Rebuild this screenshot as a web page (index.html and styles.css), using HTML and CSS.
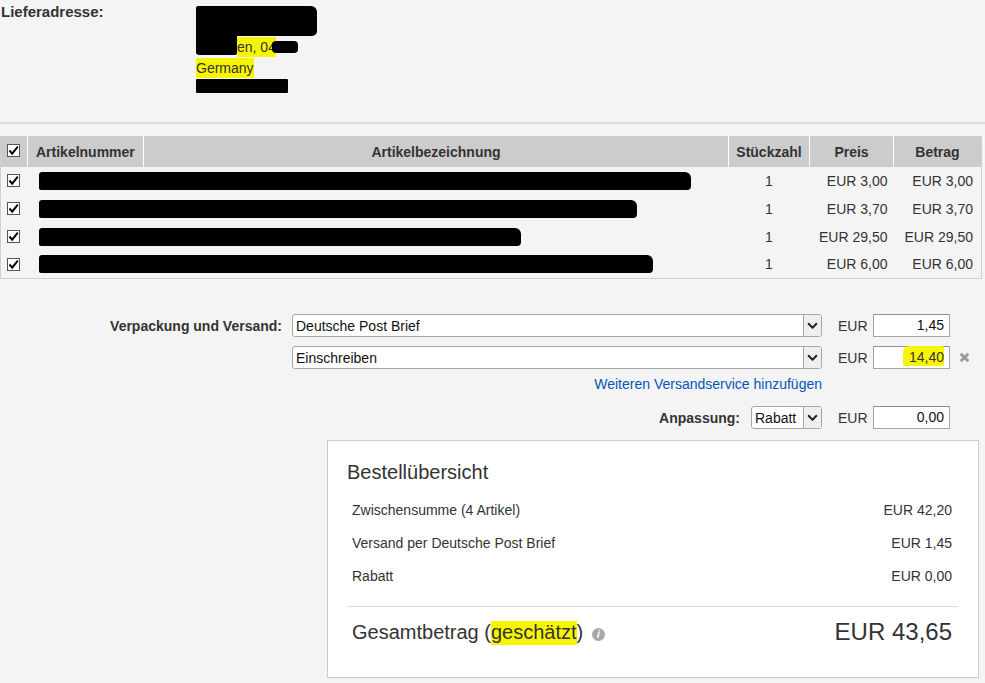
FILE: index.html
```html
<!DOCTYPE html>
<html lang="de">
<head>
    <meta charset="UTF-8">
    <title>Bestellung</title>
    <link rel="stylesheet" href="styles.css">
</head>
<body>
    <section class="address">
        <h2>Lieferadresse:</h2>
        <div class="address-lines">
            <span class="redact r-name"></span>
            <div class="addr-line">
                <span class="redact r-street"></span><span class="mark">en, 04</span><span class="redact r-zip"></span>
            </div>
            <div class="addr-line"><span class="mark">Germany</span></div>
            <span class="redact r-phone"></span>
        </div>
    </section>

    <table class="items">
        <colgroup>
            <col class="c-check">
            <col class="c-num">
            <col class="c-name">
            <col class="c-qty">
            <col class="c-price">
            <col class="c-sum">
        </colgroup>
        <thead>
            <tr>
                <th><span class="cb"><svg viewBox="0 0 11 11"><path d="M1.5 5.5 L4.2 8.6 L9.8 1.6"/></svg></span></th>
                <th class="left">Artikelnummer</th>
                <th>Artikelbezeichnung</th>
                <th>Stückzahl</th>
                <th>Preis</th>
                <th>Betrag</th>
            </tr>
        </thead>
        <tbody>
            <tr>
                <td><span class="cb"><svg viewBox="0 0 11 11"><path d="M1.5 5.5 L4.2 8.6 L9.8 1.6"/></svg></span></td>
                <td colspan="2"><span class="redact row-1"></span></td>
                <td class="qty">1</td>
                <td class="price">EUR 3,00</td>
                <td class="sum">EUR 3,00</td>
            </tr>
            <tr>
                <td><span class="cb"><svg viewBox="0 0 11 11"><path d="M1.5 5.5 L4.2 8.6 L9.8 1.6"/></svg></span></td>
                <td colspan="2"><span class="redact row-2"></span></td>
                <td class="qty">1</td>
                <td class="price">EUR 3,70</td>
                <td class="sum">EUR 3,70</td>
            </tr>
            <tr>
                <td><span class="cb"><svg viewBox="0 0 11 11"><path d="M1.5 5.5 L4.2 8.6 L9.8 1.6"/></svg></span></td>
                <td colspan="2"><span class="redact row-3"></span></td>
                <td class="qty">1</td>
                <td class="price">EUR 29,50</td>
                <td class="sum">EUR 29,50</td>
            </tr>
            <tr>
                <td><span class="cb"><svg viewBox="0 0 11 11"><path d="M1.5 5.5 L4.2 8.6 L9.8 1.6"/></svg></span></td>
                <td colspan="2"><span class="redact row-4"></span></td>
                <td class="qty">1</td>
                <td class="price">EUR 6,00</td>
                <td class="sum">EUR 6,00</td>
            </tr>
        </tbody>
    </table>

    <section class="shipping">
        <div class="ship-row">
            <label class="ship-label">Verpackung und Versand:</label>
            <div class="select wide">
                <span>Deutsche Post Brief</span>
                <span class="arrow"><svg viewBox="0 0 10 6"><path d="M1 1 L5 5 L9 1"/></svg></span>
            </div>
            <span class="cur">EUR</span>
            <div class="amount">1,45</div>
            <span></span>
        </div>
        <div class="ship-row second">
            <span></span>
            <div class="select wide">
                <span>Einschreiben</span>
                <span class="arrow"><svg viewBox="0 0 10 6"><path d="M1 1 L5 5 L9 1"/></svg></span>
            </div>
            <span class="cur">EUR</span>
            <div class="amount"><span class="mark">14,40</span></div>
            <span class="remove"><svg viewBox="0 0 10 10"><path d="M1.5 1.5 L8.5 8.5 M8.5 1.5 L1.5 8.5"/></svg></span>
        </div>
        <div class="ship-row link-row">
            <span></span>
            <a href="#" class="add-link">Weiteren Versandservice hinzufügen</a>
        </div>
        <div class="ship-row adjust">
            <div class="adjust-cell">
                <label class="ship-label">Anpassung:</label>
                <div class="select small">
                    <span>Rabatt</span>
                    <span class="arrow"><svg viewBox="0 0 10 6"><path d="M1 1 L5 5 L9 1"/></svg></span>
                </div>
            </div>
            <span class="cur">EUR</span>
            <div class="amount">0,00</div>
            <span></span>
        </div>
    </section>

    <section class="summary">
        <h3>Bestellübersicht</h3>
        <div class="sum-row"><span>Zwischensumme (4 Artikel)</span><span>EUR 42,20</span></div>
        <div class="sum-row"><span>Versand per Deutsche Post Brief</span><span>EUR 1,45</span></div>
        <div class="sum-row"><span>Rabatt</span><span>EUR 0,00</span></div>
        <div class="total">
            <span>Gesamtbetrag (<span class="mark">geschätzt</span>) <span class="info">i</span></span>
            <span class="total-value">EUR 43,65</span>
        </div>
    </section>
</body>
</html>
```

FILE: styles.css
```css
* {
    margin: 0;
    padding: 0;
    box-sizing: border-box;
}

body {
    font-family: 'Liberation Sans', Arial, sans-serif;
    font-size: 14px;
    color: #333;
    background-color: #f4f4f4;
    width: 985px;
    height: 683px;
    overflow: hidden;
}

.mark {
    background: #f8f500;
    color: #333;
}

.redact {
    display: inline-block;
    background: #000;
    border-radius: 4px;
    vertical-align: middle;
}

/* address */

.address {
    display: flex;
    height: 124px;
    border-bottom: 2px solid #dcdcdc;
}

.address h2 {
    width: 196px;
    font-size: 15px;
    line-height: 18px;
    padding: 3px 0 0 1px;
}

.address-lines {
    display: flex;
    flex-direction: column;
    align-items: flex-start;
    padding-top: 6px;
    line-height: 20px;
}

.addr-line {
    display: flex;
    align-items: center;
    height: 21px;
}

.r-name {
    width: 121px;
    height: 30px;
    border-radius: 2px 6px 5px 1px;
}

.r-street {
    width: 41px;
    height: 20px;
    margin-top: -4px;
    border-radius: 0 0 2px 3px;
}

.r-zip {
    width: 26px;
    height: 12px;
    margin-left: -4px;
}

.r-phone {
    width: 92px;
    height: 14px;
    margin-top: 1px;
    border-radius: 1px;
}

/* items table */

.items {
    width: 981px;
    margin-top: 12px;
    border-collapse: collapse;
    table-layout: fixed;
    border: 1px solid #cfcfcf;
}

.c-check { width: 27px; }
.c-num { width: 116px; }
.c-name { width: 585px; }
.c-qty { width: 81px; }
.c-price { width: 84px; }
.c-sum { width: 88px; }

.items th {
    background: #cccccc;
    height: 30px;
    font-size: 14px;
    font-weight: bold;
    color: #333;
    text-align: center;
    border-left: 1px solid #fff;
}

.items th:first-child {
    border-left: none;
}

.items th.left {
    text-align: left;
    padding-left: 8px;
}

.items td {
    height: 28px;
    white-space: nowrap;
}

.items td:first-child,
.items th:first-child {
    padding-left: 6px;
}

.items th:first-child .cb {
    margin-top: -2px;
}

.items td.qty {
    text-align: center;
}

.items td.price {
    text-align: right;
    padding-right: 6px;
}

.items td.sum {
    text-align: right;
    padding-right: 8px;
}

.cb {
    display: block;
    width: 13px;
    height: 13px;
    border: 1px solid #555;
    background: #fff;
    padding: 0;
}

.cb svg {
    display: block;
    width: 11px;
    height: 11px;
    fill: none;
    stroke: #000;
    stroke-width: 2;
}

.items td .redact {
    display: block;
    height: 18px;
    margin-left: 11px;
    border-radius: 3px 6px 4px 2px;
}

.row-1 { width: 652px; }
.row-2 { width: 598px; }
.row-3 { width: 482px; }
.row-4 { width: 614px; }

/* shipping form */

.shipping {
    margin-top: 35px;
}

.ship-row {
    display: grid;
    grid-template-columns: 292px 530px 51px 77px 35px;
    align-items: center;
}

.ship-row.second {
    margin-top: 9px;
}

.ship-row.link-row {
    margin-top: 6px;
    line-height: 18px;
}

.ship-row.adjust {
    margin-top: 13px;
    grid-template-columns: 822px 51px 77px 35px;
}

.ship-label {
    font-weight: bold;
    text-align: right;
    padding-right: 10px;
}

.adjust-cell {
    display: flex;
    justify-content: flex-end;
    align-items: center;
}

.adjust-cell .ship-label {
    padding-right: 11px;
}

.select {
    display: flex;
    justify-content: space-between;
    align-items: center;
    height: 23px;
    padding-left: 3px;
    background: #fff;
    border: 1px solid #a6a6a6;
    border-radius: 3px;
    font-size: 14px;
    color: #111;
}

.select.small {
    width: 71px;
}

.arrow {
    display: flex;
    align-items: center;
    justify-content: center;
    width: 18px;
    height: 21px;
    border-left: 1px solid #a6a6a6;
    background: #efefef;
    border-radius: 0 2px 2px 0;
}

.arrow svg {
    width: 11px;
    height: 7px;
    fill: none;
    stroke: #222;
    stroke-width: 1.8;
}

.cur {
    padding-left: 16px;
    color: #333;
}

.amount {
    height: 23px;
    line-height: 21px;
    text-align: right;
    padding-right: 5px;
    background: #fff;
    border: 1px solid #a6a6a6;
    border-top-color: #8f8f8f;
    color: #111;
}

.amount .mark {
    padding: 3px 0 1px 6px;
    border-radius: 6px 2px 2px 2px;
}

.remove {
    padding-left: 9px;
    line-height: 0;
}

.remove svg {
    width: 11px;
    height: 11px;
    stroke: #9a9a9a;
    stroke-width: 2.6;
}

.add-link {
    color: #0654ba;
    text-decoration: none;
    text-align: right;
}

/* summary */

.summary {
    width: 652px;
    height: 238px;
    margin: 11px 0 0 327px;
    padding: 19px 20px 0 19px;
    background: #fff;
    border: 1px solid #cccccc;
}

.summary h3 {
    font-size: 20px;
    font-weight: normal;
    line-height: 24px;
    margin-bottom: 10px;
}

.sum-row {
    display: flex;
    justify-content: space-between;
    height: 33px;
    line-height: 33px;
    padding: 0 6px 0 5px;
}

.total {
    display: flex;
    justify-content: space-between;
    align-items: center;
    margin-top: 13px;
    padding: 10px 6px 0 5px;
    border-top: 1px solid #dddddd;
    font-size: 20px;
    line-height: 30px;
}

.total .mark {
    padding-bottom: 2px;
}

.total-value {
    font-size: 24px;
}

.info {
    display: inline-block;
    width: 13px;
    height: 13px;
    margin-left: 3px;
    border-radius: 50%;
    background: #a8a8a8;
    color: #fff;
    font-size: 10px;
    font-weight: bold;
    font-style: italic;
    line-height: 13px;
    text-align: center;
    vertical-align: 1px;
}
```
